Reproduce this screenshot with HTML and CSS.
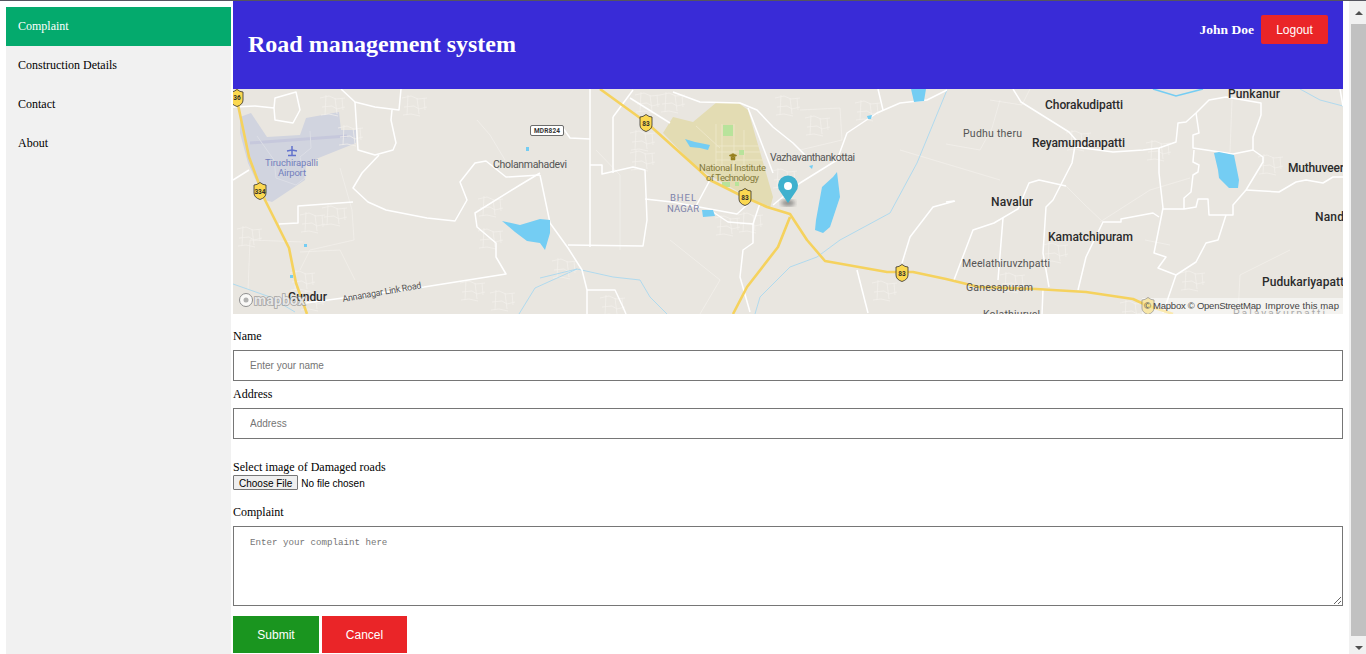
FILE: index.html
```html
<!DOCTYPE html>
<html lang="en">
<head>
<meta charset="utf-8">
<title>Road management system</title>
<link rel="stylesheet" href="styles.css">
</head>
<body>
<div class="topline"></div>
<div class="page">
  <aside class="sidecol">
    <nav class="sidebar">
      <a class="active" href="#">Complaint</a>
      <a href="#">Construction Details</a>
      <a href="#">Contact</a>
      <a href="#">About</a>
    </nav>
  </aside>
  <main class="main">
    <header class="header">
      <h1>Road management system</h1>
      <div class="user"><b>John Doe</b><button class="logout" type="button">Logout</button></div>
    </header>
    <svg class="map" viewBox="233 89 1110 225" width="1110" height="225" role="img" aria-label="Map">
      <defs>
        <g id="village">
          <path d="M0 3l9-2 7 3 9-1M2 12l10-1 5 3 8-2M6 0l-1 20M15 3l2 16M1 20l8-1 9 2M22 3l1 12"/>
        </g>
        <g id="shield">
          <path class="shieldp" d="M-6 -6 Q-3 -6 0 -8.500 Q3 -6 6 -6 V2 Q6 6.500 0 8.500 Q-6 6.500 -6 2 Z"/>
        </g>
        <filter id="blur"><feGaussianBlur stdDeviation="2"/></filter>
      </defs>
      <rect class="bg" x="233" y="89" width="1110" height="225"/>

      <polygon class="airport" points="240,117 251,113 267,137 300,135 306,118 339,112 341,130 356,130 356,143 306,163 305,180 272,202 265,200 248,163 240,133"/>
      <line class="runway" x1="250" y1="143" x2="347" y2="136"/>
      <polyline class="airline" points="257,136 274,160 276,178 296,185 305,178 300,157 311,148 310,131"/>
      <polygon class="campus" points="673,117 693,122 717,102 737,102 748,110 773,197 770,208 753,200 697,168 663,133"/>
      <path class="campuslines" d="M716 124v42M722 124v46M734 124v50M744 130v46M716 146h44M716 152h46M716 160h48M712 166h54M696 126l24 22"/>
      <rect class="green" x="723" y="125" width="10" height="11"/>
      <rect class="green" x="739" y="150" width="5" height="5"/>
      <rect class="green" x="722" y="182" width="8" height="5"/>
      <rect class="green" x="735" y="182" width="4" height="4"/>

      <g class="minorg">
        <use href="#village" x="237" y="226"/><use href="#village" x="300" y="212"/><use href="#village" x="322" y="205"/>
        <use href="#village" x="290" y="270"/><use href="#village" x="300" y="290"/><use href="#village" x="338" y="125"/>
        <use href="#village" x="320" y="95"/><use href="#village" x="402" y="95"/><use href="#village" x="460" y="280"/>
        <use href="#village" x="490" y="290"/><use href="#village" x="478" y="196"/><use href="#village" x="478" y="228"/>
        <use href="#village" x="552" y="258"/><use href="#village" x="600" y="295"/>
        <use href="#village" x="635" y="92"/><use href="#village" x="660" y="92"/>
        <use href="#village" x="715" y="215"/><use href="#village" x="738" y="212"/><use href="#village" x="772" y="168"/>
        <use href="#village" x="775" y="95"/><use href="#village" x="805" y="115"/><use href="#village" x="855" y="100"/>
        <use href="#village" x="630" y="130"/><use href="#village" x="630" y="150"/><use href="#village" x="872" y="280"/>
        <use href="#village" x="1146" y="140"/><use href="#village" x="1258" y="154"/><use href="#village" x="1180" y="270"/>
        <use href="#village" x="1043" y="242"/><use href="#village" x="1000" y="272"/><use href="#village" x="1120" y="300"/>
        <use href="#village" x="1066" y="130"/>
        <polyline points="340,168 352,210 354,240 310,250 300,270"/>
        <polyline points="477,120 490,135 505,160"/>
        <polyline points="303,242 250,240 248,290"/>
        <polyline points="300,252 340,250 355,280"/>
        <polyline points="1100,222 1150,190 1190,178"/>
        <polyline points="1066,186 1085,205 1103,222"/>
        <polyline points="946,144 980,150 992,128 1000,100"/>
        <polyline points="1232,100 1230,152"/>
        <polyline points="1145,240 1170,245"/>
        <polyline points="1290,250 1240,275 1238,314"/>
        <polyline points="800,110 840,108 842,140 800,150"/>
        <polyline points="900,150 1000,180"/>
        <polyline points="596,150 620,175 620,250"/>
        <polyline points="670,240 720,280 700,314"/>
        <polyline points="990,100 1022,105 1030,89"/>
      </g>

      <g class="stream">
        <polyline points="233,284 270,297 295,312"/>
        <polyline points="540,278 577,269 613,277 640,280 650,297 667,314"/>
        <polyline points="755,314 760,297 790,267 817,257 840,240 890,213 917,163 947,90"/>
        <polyline points="1300,89 1320,100 1343,106"/>
        <polyline points="519,314 535,288 577,269"/>
      </g>
      <polyline class="stream wide" points="1153,89 1176,96 1203,89"/>

      <g class="road">
        <polyline points="233,107 255,106 274,108 275,120 293,123 300,110 296,92 275,98 274,108"/>
        <polyline points="341,89 355,102 375,107 399,110 401,89"/>
        <polyline points="355,102 358,150 375,155 393,150 396,143 391,120 392,110"/>
        <polyline points="379,155 362,173 353,188 368,202 386,210 427,218 455,221 467,200 460,182 475,163 486,161 506,177 540,175"/>
        <polyline points="540,173 520,185 475,213 477,227 496,243 496,257 506,274 424,287 306,303"/>
        <polyline points="279,224 298,223 298,206 353,202"/>
        <polyline points="233,180 249,170"/>
        <polyline points="540,175 550,223 568,248 582,270 587,290 587,314"/>
        <polyline points="590,89 590,247"/>
        <polyline points="568,245 643,246 647,220 645,170 633,167 602,174 602,165 590,165"/>
        <polyline points="613,117 613,173"/>
        <polyline points="613,117 633,90"/>
        <polyline points="630,98 670,123"/>
        <polyline points="563,128 570,138 590,139"/>
        <polyline points="645,199 672,202 737,214 747,205"/>
        <polyline points="710,180 695,208"/>
        <polyline points="713,212 728,222 753,224 760,203"/>
        <polyline points="753,224 753,243 743,250 740,277 750,312"/>
        <polyline points="587,290 615,290 623,307 626,314"/>
        <polyline points="673,92 700,102 740,103 757,110 773,127 793,143 805,155"/>
        <polyline points="748,108 773,173"/>
        <polyline points="773,205 800,183 837,160 847,133 877,113 900,103 927,100 947,90"/>
        <polyline points="878,89 883,110"/>
        <polyline points="902,263 910,237 933,207 955,201"/>
        <polyline points="857,270 868,313"/>
        <polyline points="1013,89 1021,102 1069,132 1076,140 1072,163 1053,200 1046,207 1043,253 1049,287"/>
        <polyline points="1076,147 1113,152 1143,150 1159,148 1176,142 1178,123 1186,122 1196,113 1209,100 1226,97 1261,103 1261,115 1253,137 1253,150 1263,157 1263,162 1246,190 1233,205 1233,215 1209,215 1208,199 1198,199 1196,207 1184,209 1163,209"/>
        <polyline points="1159,148 1159,173 1163,208 1154,253 1166,257 1158,268 1176,275 1163,313"/>
        <polyline points="1196,113 1199,133 1193,135 1193,148 1233,154 1253,150"/>
        <polyline points="1194,150 1193,162 1199,165 1198,172 1193,175 1191,192 1184,198 1184,209"/>
        <polyline points="1246,190 1279,192 1296,182 1306,180 1323,183 1333,177 1343,177"/>
        <polyline points="1226,215 1218,240 1206,243 1196,262 1176,275"/>
        <polyline points="946,202 954,201"/>
        <polyline points="954,280 973,230 994,223 1018,209 1029,183 1039,180 1066,186"/>
        <polyline points="1003,218 998,280"/>
        <polyline points="1159,217 1153,213 1121,219 1121,222 1103,222 1086,257 1078,290"/>
        <polyline points="1043,289 1042,314"/>
        <polyline points="1340,89 1343,106"/>
      </g>

      <g class="hwy">
        <polyline points="237,89 237,100 249,157 265,200 289,248 296,283 307,314"/>
        <polyline points="600,89 647,123 697,168 710,180 740,195 767,207 790,214 807,240 825,261 887,272 913,272 946,279 979,287 1036,289 1086,292 1133,299 1146,305 1173,314"/>
        <polyline points="790,217 778,247 747,287 733,314"/>
      </g>

      <g class="water">
        <polygon points="815,230 816,220 822,187 833,177 837,172 840,197 830,227 823,233"/>
        <polygon points="502,221 520,225 540,219 550,220 550,233 545,250 540,243 527,241 515,232"/>
        <polygon points="1214,153 1219,152 1234,155 1239,180 1238,188 1229,188 1219,178 1218,170"/>
        <polygon points="685,139 695,142 710,145 708,150 700,148 690,147"/>
        <polygon points="702,210 713,210 715,216 703,217"/>
        <polygon points="911,89 926,89 924,101 914,102"/>
        <polygon points="867,116 872,115 871,119 868,119"/>
        <polygon points="809,166 813,165 812,169"/>
        <rect x="526" y="147" width="3" height="4"/>
        <rect x="290" y="275" width="3" height="3"/>
        <rect x="304" y="244" width="3" height="3"/>
      </g>

      <g class="shieldnum">
        <use href="#shield" x="237" y="98"/><text x="237" y="100">36</text>
        <use href="#shield" x="260" y="191"/><text x="260" y="194">334</text>
        <use href="#shield" x="646" y="123"/><text x="646" y="126">83</text>
        <use href="#shield" x="745" y="197"/><text x="745" y="200">83</text>
        <use href="#shield" x="902" y="273"/><text x="902" y="276">83</text>
      </g>
      <rect class="mdrbox" x="530.500" y="125.500" width="33" height="10" rx="1.500"/>
      <text class="mdr" x="534" y="133" textLength="26">MDR824</text>

      <path class="plane" d="M292 146v10M288 155.500h8M287 151l5-1 5 1"/>
      <g class="lbl air">
        <text x="265" y="165.500" textLength="53">Tiruchirapalli</text>
        <text x="278" y="175.500" textLength="28">Airport</text>
      </g>
      <g class="lbl mid">
        <text x="493" y="168" textLength="74">Cholanmahadevi</text>
        <text x="770" y="161" textLength="85">Vazhavanthankottai</text>
        <text x="963" y="137" textLength="59">Pudhu theru</text>
        <text x="962" y="267" textLength="88">Meelathiruvzhpatti</text>
        <text x="966" y="291" textLength="67">Ganesapuram</text>
        <text x="983" y="318" textLength="57">Kolathiurvel</text>
        <text x="1233" y="317" textLength="92">Palayakurpatti</text>
      </g>
      <g class="lbl big">
        <text x="1045" y="109" textLength="78">Chorakudipatti</text>
        <text x="1228" y="98" textLength="52">Punkanur</text>
        <text x="1032" y="147" textLength="93">Reyamundanpatti</text>
        <text x="1288" y="172" textLength="56">Muthuveer</text>
        <text x="991" y="206" textLength="42">Navalur</text>
        <text x="1048" y="241" textLength="85">Kamatchipuram</text>
        <text x="1315" y="221" textLength="29">Nand</text>
        <text x="1262" y="286" textLength="82">Pudukariyapatt</text>
        <text x="288" y="301" textLength="39">Gundur</text>
      </g>
      <g class="lbl campusl">
        <text x="699" y="171" textLength="67">National Institute</text>
        <text x="706" y="181" textLength="53">of Technology</text>
      </g>
      <path class="hat" d="M729 155.500l4-2 4 2-4 2zM731 157v3h4v-3"/>
      <g class="lbl area">
        <text x="670" y="201" textLength="26">BHEL</text>
        <text x="667" y="212" textLength="32">NAGAR</text>
      </g>
      <text class="lbl thin" transform="translate(343 302) rotate(-10)" textLength="80">Annanagar Link Road</text>

      <ellipse class="mshadow" cx="788" cy="203" rx="7" ry="3" filter="url(#blur)"/>
      <path class="marker" d="M788 203 L780.500 192 A10 10 0 1 1 795.500 192 Z"/>
      <circle class="mdot" cx="788" cy="186" r="4"/>

      <g class="logo">
        <circle cx="246" cy="300" r="6.500"/>
        <circle class="logoi" cx="246" cy="300" r="2.500"/>
        <text x="254" y="305" textLength="51">mapbox</text>
      </g>
      <rect class="attrib" x="1142" y="298" width="201" height="16"/>
      <g class="shieldnum faded">
        <use href="#shield" x="1148" y="306"/>
      </g>
      <text class="attr" x="1144" y="309" textLength="117">© Mapbox © OpenStreetMap</text>
      <text class="attr" x="1265" y="309" textLength="74">Improve this map</text>
    </svg>
    <form class="form">
      <div class="field">
        <label for="name">Name</label>
        <input class="text" id="name" type="text" placeholder="Enter your name">
      </div>
      <div class="field">
        <label for="address">Address</label>
        <input class="text" id="address" type="text" placeholder="Address">
      </div>
      <div class="field file">
        <label for="photo">Select image of Damaged roads</label>
        <input class="filein" id="photo" type="file">
      </div>
      <div class="field complaint">
        <label for="complaint">Complaint</label>
        <textarea id="complaint" placeholder="Enter your complaint here"></textarea>
      </div>
      <div class="actions">
        <button class="submit" type="button">Submit</button>
        <button class="cancel" type="button">Cancel</button>
      </div>
    </form>
  </main>
  <div class="scrollbar" aria-hidden="true">
    <span class="arrow up"></span>
    <span class="thumb"></span>
    <span class="arrow down"></span>
  </div>
</div>
</body>
</html>
```
FILE: styles.css
```css
* { box-sizing: border-box; }
html, body { margin: 0; height: 654px; overflow: hidden; background: #fff; }
body { font-family: "Liberation Serif", "Times New Roman", serif; font-size: 12px; color: #000; }
.topline { height: 1px; background: #55555f; }
.page { display: flex; height: 653px; }

.sidecol { width: 233px; padding: 6px 2px 0 6px; flex: none; }
.sidebar { height: 100%; background: #f1f1f1; }
.sidebar a { display: block; padding: 12px; line-height: 15px; color: #000; text-decoration: none; }
.sidebar a.active { background: #04aa6d; color: #fff; }

.main { width: 1110px; flex: none; }
.header { height: 88px; background: #392bd7; color: #fff; display: flex; justify-content: space-between; align-items: flex-start; padding: 14px 15px 0 15px; }
.header h1 { margin: 15px 0 0; font-size: 24px; line-height: 28px; font-weight: bold; }
.user { display: flex; align-items: center; gap: 7px; font-size: 13.500px; }
.logout { width: 67px; height: 29px; border: 0; border-radius: 2px; background: #ea2528; color: #fff; font: 12px "Liberation Sans", Arial, sans-serif; padding: 0; }

.map { display: block; }
.bg { fill: #e9e6e0; }
.airport { fill: #d1d4df; }
.runway { stroke: #c6c8dc; stroke-width: 3; }
.airline { fill: none; stroke: #dcdee6; stroke-width: 1; }
.campus { fill: #e3dcb3; }
.campuslines { fill: none; stroke: #efe9cb; stroke-width: 0.8; }
.green { fill: #b8e39b; }
.minorg { fill: none; stroke: #f3f1ed; stroke-width: 0.7; }
.road { fill: none; stroke: #fff; stroke-width: 1.500; stroke-linejoin: round; }
.stream { fill: none; stroke: #a9d8ef; stroke-width: 0.9; }
.stream.wide { stroke: #74cdf3; stroke-width: 1.600; }
.hwy { fill: none; stroke: #f5d25e; stroke-width: 2.600; stroke-linejoin: round; }
.water { fill: #74cdf3; }
.shieldp { fill: #fbd850; stroke: #33302a; stroke-width: 0.8; }
.shieldnum text { font: bold 6.500px Roboto, "Liberation Sans", sans-serif; fill: #33302a; text-anchor: middle; }
.faded { opacity: 0.45; }
.mdrbox { fill: #fff; stroke: #4a4a4a; stroke-width: 0.8; }
.mdr { font: bold 6.500px Roboto, "Liberation Sans", sans-serif; fill: #333; }
.plane { fill: none; stroke: #6272cc; stroke-width: 1.500; }
.lbl { font-family: Roboto, "Liberation Sans", sans-serif; }
.air { font-size: 9.500px; fill: #7380bd; }
.mid { font-size: 10.500px; fill: #555; }
.big { font-size: 12px; fill: #2b2b2b; font-weight: 500; }
.campusl { font-size: 9.500px; fill: #857b3c; }
.hat { fill: #96801f; stroke: #96801f; stroke-width: 0.5; }
.area { font-size: 9.500px; fill: #7d83aa; }
.thin { font-size: 9px; fill: #555; }
.mshadow { fill: #444; opacity: 0.6; }
.marker { fill: #3fb1ce; }
.mdot { fill: #fff; }
.logo circle { fill: #fff; fill-opacity: 0.75; stroke: #8f8f8f; stroke-width: 1; }
.logo .logoi { fill: #9a9a9a; stroke: none; }
.logo text { font: bold 14px Roboto, "Liberation Sans", sans-serif; fill: #f4f4f4; stroke: #8f8f8f; stroke-width: 1.500; paint-order: stroke; stroke-opacity: 0.8; fill-opacity: 0.85; }
.attrib { fill: #fff; fill-opacity: 0.5; }
.attr { font: 9.500px "Liberation Sans", Arial, sans-serif; fill: #444; }

.form { padding-top: 15px; }
.field label { display: block; line-height: 14px; margin-bottom: 7px; }
.field { margin-bottom: 6px; }
.text { display: block; width: 100%; height: 31px; border: 1px solid #767676; padding: 0 16px; font: 10px "Liberation Sans", Arial, sans-serif; outline: 0; }
.text::placeholder { color: #757575; }
.file { margin-top: 21px; margin-bottom: 15px; }
.file label { margin-bottom: 1px; }
.filein { display: block; font: 10px "Liberation Sans", Arial, sans-serif; height: 15px; line-height: 15px; }
.filein::file-selector-button { font: inherit; height: 15px; padding: 0 5px; margin-right: 3px; border: 1px solid #767676; border-radius: 1px; background: #efefef; color: #000; }
.complaint { margin-bottom: 10px; }
textarea { display: block; width: 100%; height: 80px; border: 1px solid #767676; padding: 10px 16px; font: 9.170px "Liberation Mono", Consolas, monospace; outline: 0; resize: vertical; }
textarea::placeholder { color: #757575; }
.actions { display: flex; gap: 3px; }
.actions button { height: 37px; border: 0; color: #fff; font: 12px "Liberation Sans", Arial, sans-serif; padding: 0; }
.submit { width: 86px; background: #1a951f; }
.cancel { width: 85px; background: #ea2528; }

.scrollbar { width: 17px; margin-left: 6px; flex: none; background: #f1f1f1; display: flex; flex-direction: column; align-items: flex-end; }
.arrow { width: 15px; height: 23px; flex: none; display: flex; align-items: center; justify-content: center; }
.arrow::before { content: ""; border-left: 4px solid transparent; border-right: 4px solid transparent; }
.up::before { border-bottom: 4px solid #505050; }
.down::before { border-top: 4px solid #505050; margin-top: 6px; }
.thumb { width: 15px; flex: 1; background: #c1c1c1; }
.down { height: 18px; }
```
